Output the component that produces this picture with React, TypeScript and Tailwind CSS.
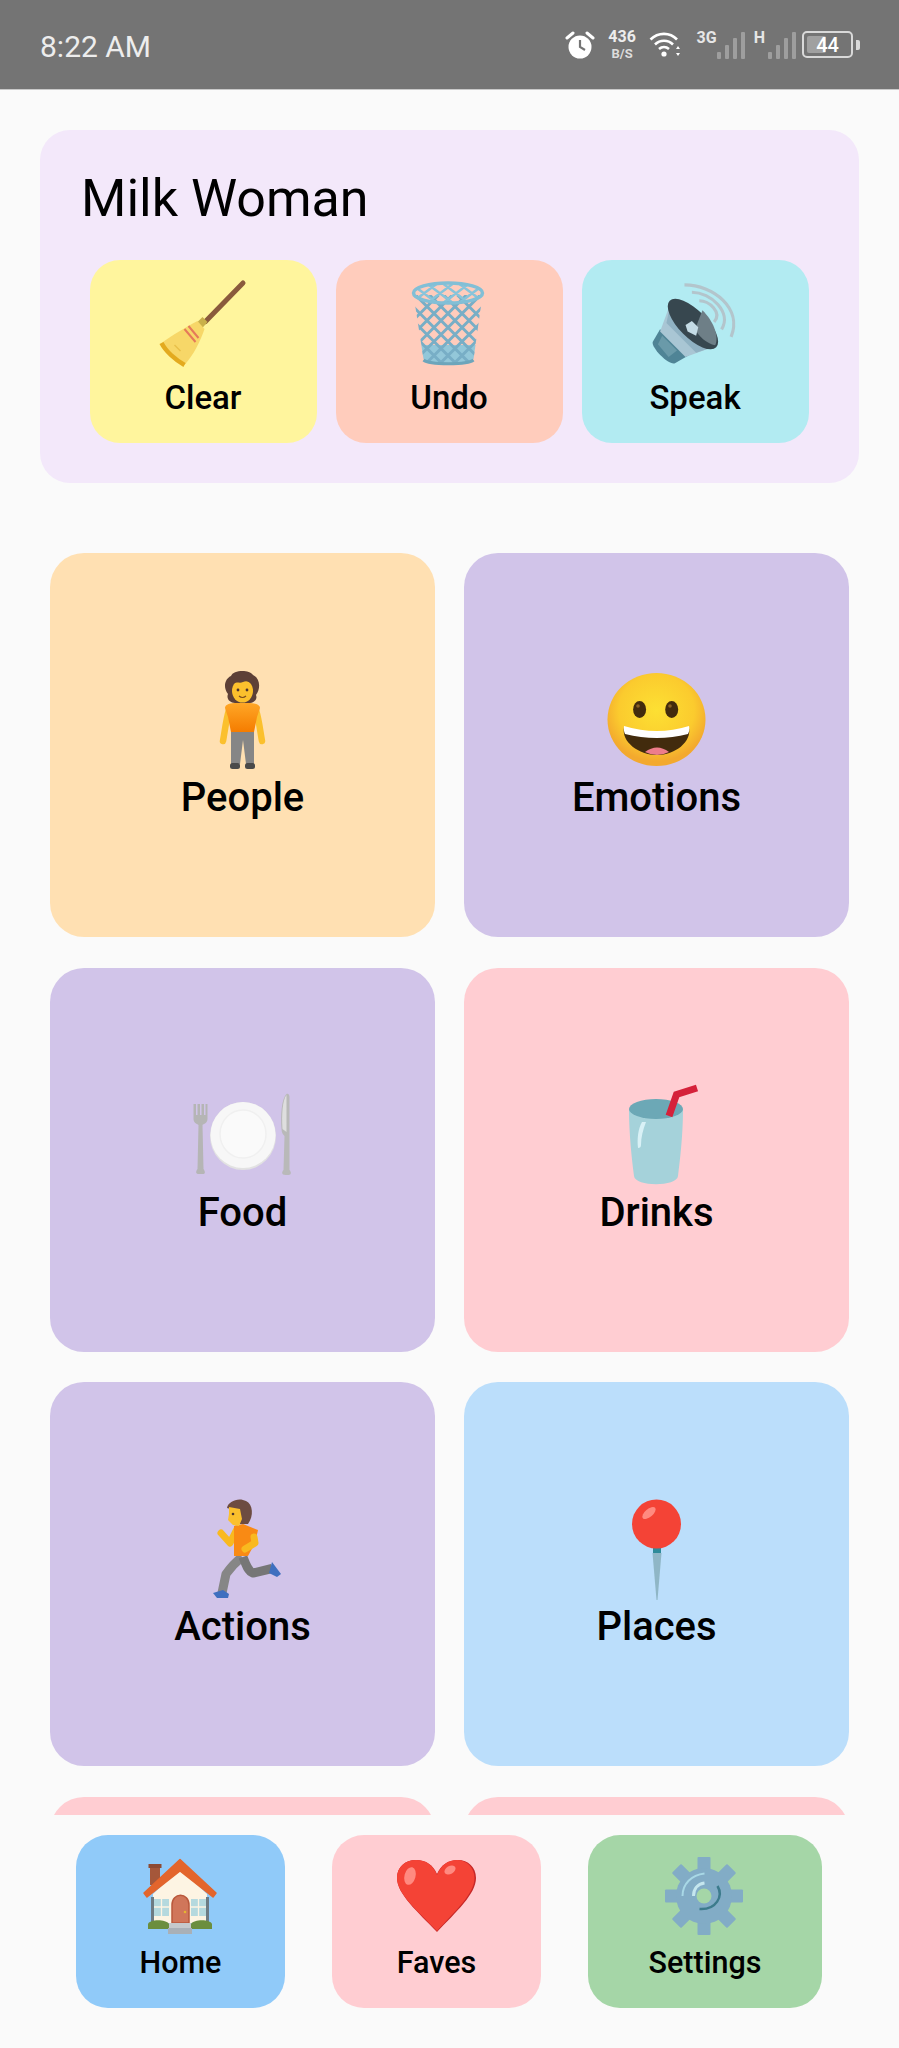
import React from 'react';

const Broom = () => (
  <svg viewBox="2.5 0 100 100" className="w-[100px] h-[100px] overflow-visible">
    <path d="M92.5 8 L55 46.5" stroke="#8a5a3c" strokeWidth="5" strokeLinecap="round" />
    <path d="M46 48 L52 42 L57 47 L51 54Z" fill="#c9b04a" />
    <path d="M47 46 L54 54 C50 66 43 80 34 90 L11 68 C22 60 36 52 47 46Z" fill="#f7d768" />
    <path d="M11 68 C15 76 25 85 34 90" stroke="#e3aa1f" strokeWidth="4.5" fill="none" />
    <path d="M34 54 L45 67 M38 51 L48 63" stroke="#e5795a" strokeWidth="2" />
    <path d="M24 70 L30 76" stroke="#e8c04a" strokeWidth="1.5" />
  </svg>
);

const Basket = () => (
  <svg viewBox="249.5 0 100 100" className="w-[100px] h-[100px] overflow-visible">
    <defs>
      <clipPath id="basketBody">
        <path d="M264 20 L333 20 L324 84 C318 90 280 90 274 84Z" />
      </clipPath>
      <clipPath id="basketTop">
        <ellipse cx="298.5" cy="18" rx="33" ry="9" />
      </clipPath>
    </defs>
    <g clipPath="url(#basketBody)">
      <rect x="262" y="70" width="74" height="22" fill="#80c6de" opacity="0.85" />
      <path
        d="M224 20 L294 90 M238 20 L308 90 M252 20 L322 90 M266 20 L336 90 M280 20 L350 90 M294 20 L364 90 M308 20 L378 90 M373 20 L303 90 M359 20 L289 90 M345 20 L275 90 M331 20 L261 90 M317 20 L247 90 M303 20 L233 90 M289 20 L219 90"
        stroke="#78aec6"
        strokeWidth="3"
      />
    </g>
    <path d="M274 85 C280 90 318 90 324 85" stroke="#6da5bb" strokeWidth="3" fill="none" />
    <g clipPath="url(#basketTop)">
      <path
        d="M262 9 L290 30 M278 9 L306 30 M294 9 L322 30 M310 9 L338 30 M335 9 L307 30 M319 9 L291 30 M303 9 L275 30 M287 9 L259 30"
        stroke="#88c4da"
        strokeWidth="2.5"
      />
    </g>
    <ellipse cx="298.5" cy="18" rx="34.5" ry="10" fill="none" stroke="#82bfd6" strokeWidth="3.5" />
  </svg>
);

const Speaker = () => (
  <svg viewBox="5 0 100 100" className="w-[100px] h-[100px] overflow-visible">
    <g transform="translate(54 48) scale(1.06) translate(-54 -48)">
      <path d="M45 12 C72 12 100 34 89 61" stroke="#b3c5cc" strokeWidth="3" fill="none" />
      <path d="M52 19 C70 19 90 38 80 54" stroke="#b3c5cc" strokeWidth="3" fill="none" />
      <path d="M59 27 C68 27 81 38 73 47" stroke="#b3c5cc" strokeWidth="3" fill="none" />
      <path d="M22 54 L15 66 C14 72 30 88 36 86 L50 78Z" fill="#4f8496" />
      <path d="M24 60 L20 68 L30 80 L38 74Z" fill="#6a9aa9" />
      <path d="M32 29 L22 56 L46 80 L74 70Z" fill="#a9c6d4" />
      <path d="M32 29 L28 48 L56 76 L74 70Z" fill="#90b2c3" />
      <ellipse cx="53" cy="49" rx="31" ry="13" transform="rotate(45 53 49)" fill="#37474f" />
      <path d="M62 36 C72 46 78 60 74 69 C66 68 58 60 55 54Z" fill="#6e7f87" />
      <path d="M46 50 L52 46 L58 52 L56 60 L48 56Z" fill="#c4dbe5" />
    </g>
  </svg>
);

const Person = () => (
  <svg viewBox="0 0 100 100" className="w-[100px] h-[100px] overflow-visible">
    <defs>
      <linearGradient id="shirtFill" x1="0" y1="0" x2="0" y2="1">
        <stop offset="0%" stopColor="#ffa726" />
        <stop offset="100%" stopColor="#f57c00" />
      </linearGradient>
    </defs>
    <path d="M36 40 C33 50 32 60 30 71" stroke="#fbc02d" strokeWidth="6.5" strokeLinecap="round" fill="none" />
    <path d="M63 40 C66 50 67 60 69 71" stroke="#fbc02d" strokeWidth="6.5" strokeLinecap="round" fill="none" />
    <path d="M38 60 L61 60 L61 94 L53 94 L50 70 L47 94 L38 94Z" fill="#868686" />
    <rect x="37" y="93" width="10" height="6" rx="2.5" fill="#4a4a4a" />
    <rect x="52" y="93" width="10" height="6" rx="2.5" fill="#4a4a4a" />
    <path d="M32 38 C32 34 38 33 43 33 L55 33 C60 33 67 34 67 38 L64 47 L61 62 L38 62 L35 47Z" fill="url(#shirtFill)" />
    <path d="M35 24 C29 16 33 8 38 6 C40 0 56 -1 60 5 C67 8 68 18 63 25 C65 30 60 33 57 33 L42 33 C37 33 33 29 35 24Z" fill="#5d4037" />
    <ellipse cx="49.5" cy="21" rx="10.5" ry="11.5" fill="#fbc02d" />
    <path d="M38 16 C42 10 46 14 50 12 C54 10 58 12 61 17 L60 8 L40 8Z" fill="#5d4037" />
    <circle cx="45" cy="20" r="1.4" fill="#4e342e" />
    <circle cx="54" cy="20" r="1.4" fill="#4e342e" />
    <path d="M46 26 Q49.5 29 53 26" stroke="#7a4a1e" strokeWidth="1.2" fill="none" />
  </svg>
);

const Grin = () => (
  <svg viewBox="0 0 100 100" className="w-[100px] h-[100px] overflow-visible">
    <defs>
      <radialGradient id="faceFill" cx="50%" cy="40%" r="55%">
        <stop offset="0%" stopColor="#fde033" />
        <stop offset="70%" stopColor="#fbcb2e" />
        <stop offset="100%" stopColor="#f3a92e" />
      </radialGradient>
    </defs>
    <ellipse cx="49.5" cy="49.5" rx="49" ry="46.5" fill="url(#faceFill)" />
    <ellipse cx="32.6" cy="39.5" rx="6.5" ry="8.5" fill="#422b0d" />
    <ellipse cx="64.7" cy="39.5" rx="6.5" ry="8.5" fill="#422b0d" />
    <circle cx="31" cy="36" r="1.8" fill="#896024" />
    <circle cx="63" cy="36" r="1.8" fill="#896024" />
    <path d="M17 57 Q50 67 82 57 C85 72 68 85 50 85 C32 85 14 72 17 57Z" fill="#422b0d" />
    <path d="M38 82 Q50 73 62 82 Q56 85 50 85 Q44 85 38 82Z" fill="#ed7d8b" />
    <path d="M17 56 Q50 66 82 56 C83 59 82 62 81 64 Q50 72 18 64 C17 62 16.5 59 17 56Z" fill="#ffffff" />
  </svg>
);

const Plate = () => (
  <svg viewBox="12.5 0 100 100" className="w-[100px] h-[100px] overflow-visible">
    <path d="M13 19 L13 34 C13 38 17 39 18 40 L17 84 C15 87 15 89 19 89 L22 89 C25 89 25 87 23 84 L22 40 C23 39 27 38 27 34 L27 19 L25 19 L25 30 L23.5 30 L23.5 19 L21 19 L21 30 L19.5 30 L19.5 19 L17 19 L17 30 L15.5 30 L15.5 19Z" fill="#b5b5b5" />
    <ellipse cx="62.5" cy="51" rx="33" ry="34" fill="#e2e2e2" />
    <ellipse cx="62.5" cy="50" rx="32.5" ry="33" fill="#f7f7f7" />
    <ellipse cx="62.5" cy="49" rx="23" ry="24" fill="#fafafa" stroke="#f0f0f0" strokeWidth="1.5" />
    <path d="M106 9 C101 14 100 30 101 44 C101 48 103 50 104 51 L103 85 C101 87 101 90 105 90 L108 90 C111 90 111 87 109 85 L109 50 L109 12 C109 9 107 8 106 9Z" fill="#b9b9b9" />
    <path d="M106 10 C102 15 101 30 102 44 L106 47Z" fill="#dedede" />
  </svg>
);

const Cup = () => (
  <svg viewBox="0 0 100 100" className="w-[100px] h-[100px] overflow-visible">
    <path d="M22 24 C22 50 25 75 27 91 C28 102 70 102 71 91 C73 75 76 50 76 24Z" fill="#a5d2da" />
    <ellipse cx="49" cy="24" rx="27" ry="10" fill="#6ca8b6" />
    <path d="M35 37 C31 44 30 54 31 63 C33 63 34 62 34 60 C34 52 36 45 39 37Z" fill="#d9f1f6" />
    <path d="M62 31 L69.5 9.5 L90 3" stroke="#d5213a" strokeWidth="7" fill="none" />
  </svg>
);

const Runner = () => (
  <svg viewBox="0 0 100 100" className="w-[100px] h-[100px] overflow-visible">
    <path d="M49 58 C44 62 38 68 33 75 L29 94" stroke="#868686" strokeWidth="9" strokeLinejoin="round" fill="none" />
    <path d="M50 58 C53 66 55 72 60 74 L79 69.5" stroke="#767676" strokeWidth="9" strokeLinejoin="round" fill="none" />
    <path d="M79 63 L88 75 L84 78 L76 74Z" fill="#3e6fbf" />
    <path d="M20 94 L30 91 L36 95 L35 99 L24 99Z" fill="#3e6fbf" />
    <path d="M44 30 L37 44 L28 34" stroke="#f9b91f" strokeWidth="7" strokeLinecap="round" strokeLinejoin="round" fill="none" />
    <path d="M41 27 L50 25 L65 31 L62 44 L55 57 L41 57Z" fill="#f98a14" />
    <path d="M61 38 L62 44 L52 50" stroke="#f9b91f" strokeWidth="7" strokeLinecap="round" strokeLinejoin="round" fill="none" />
    <path d="M34 9 C35 2 46 -2 53 2 C60 5 61 17 55 25 L47 25 L45 12Z" fill="#6d4c41" />
    <path d="M36 8 L47 10 L49 20 L46 27 L40 26 L35 21 L36 15Z" fill="#fbc02d" />
    <circle cx="40" cy="15" r="1.3" fill="#4e342e" />
  </svg>
);

const Pin = () => (
  <svg viewBox="0 0 100 100" className="w-[100px] h-[100px] overflow-visible">
    <path d="M45.5 54 L54.5 54 L50.5 101 L49.5 101Z" fill="#8fb6c6" />
    <rect x="46" y="47" width="8" height="7" fill="#2e8b9a" />
    <circle cx="49.5" cy="25" r="24.5" fill="#f44336" />
    <ellipse cx="42" cy="14" rx="8" ry="4" transform="rotate(-40 42 14)" fill="#ff8a80" />
  </svg>
);

const House = () => (
  <svg viewBox="1 0 100 85" className="w-[100px] h-[85px] overflow-visible">
    <rect x="20" y="15" width="10" height="20" fill="#a5573a" />
    <rect x="18.5" y="14" width="13" height="4" fill="#8d4a33" />
    <path d="M23 44 L50 19 L77 44 L77 73 L23 73Z" fill="#fdf4e3" />
    <rect x="21" y="47" width="3" height="25" fill="#6d7b83" />
    <rect x="76" y="47" width="3" height="25" fill="#6d7b83" />
    <path d="M24 49 L39 49 L39 66 L24 66Z" fill="#b5d9de" />
    <path d="M61 49 L76 49 L76 66 L61 66Z" fill="#b5d9de" />
    <path d="M31.5 49 V66 M24 57 H39 M68.5 49 V66 M61 57 H76" stroke="#fdf4e3" strokeWidth="1.3" />
    <path d="M42 73 L42 55 C42 42 59 42 59 55 L59 73Z" fill="#d0765a" stroke="#b9583c" strokeWidth="1.5" />
    <circle cx="55" cy="62" r="1.3" fill="#e5b531" />
    <path d="M18 79 L18 74 C20 69 36 69 39 74 L39 79Z" fill="#6b8e3e" />
    <path d="M61 79 L61 74 C64 69 80 69 82 74 L82 79Z" fill="#6b8e3e" />
    <rect x="39" y="73" width="22" height="5" fill="#c5c9cc" />
    <rect x="38" y="78" width="24" height="6" fill="#a9b0b7" />
    <path d="M14 43 L50 9.5 L86 43 L83 47 L50 21 L17 47Z" fill="#e3652c" stroke="#e3652c" strokeWidth="1.5" strokeLinejoin="round" />
  </svg>
);

const Heart = () => (
  <svg viewBox="-1 0 100 85" className="w-[100px] h-[85px] overflow-visible">
    <path d="M49 82 C30 62 9 44 9 28 C9 17 17 10 28 10 C38 10 45 15 49 24 C53 15 60 10 70 10 C80 10 88 17 88 28 C88 44 68 62 49 82Z" fill="#c62828" />
    <path d="M49 81 C30 61 9 44 9 28 C9 17 17 10 28 10 C38 10 45 15 49 25 C53 15 60 10 69 10 C79 10 86.5 18 86.5 28 C86.5 44 67 61 49 81Z" fill="#f44336" />
    <ellipse cx="22" cy="26" rx="5.5" ry="9" transform="rotate(15 22 26)" fill="#ff8a80" />
    <ellipse cx="62" cy="20" rx="6" ry="4" transform="rotate(-30 62 20)" fill="#ff8a80" />
  </svg>
);

const Gear = () => (
  <svg viewBox="0.5 0 100 85" className="w-[100px] h-[85px] overflow-visible">
    <g fill="#82acc6">
      <rect x="43" y="7" width="13" height="78" rx="1" />
      <rect x="43" y="7" width="13" height="78" rx="1" transform="rotate(45 49.5 46)" />
      <rect x="43" y="7" width="13" height="78" rx="1" transform="rotate(90 49.5 46)" />
      <rect x="43" y="7" width="13" height="78" rx="1" transform="rotate(135 49.5 46)" />
      <circle cx="49.5" cy="46" r="28" />
    </g>
    <circle cx="49.5" cy="46" r="7.5" fill="#a5d6a7" />
    <path d="M28 46 C28 34 37 25 50 23.5" stroke="#a8d8e6" strokeWidth="2" fill="none" />
    <path d="M39 46 C39 39 43 34 50 33" stroke="#c5e6ee" strokeWidth="3" fill="none" />
    <path d="M63 36 C69 46 62 60 45 59" stroke="#3c7b8c" strokeWidth="2.5" fill="none" />
  </svg>
);

const categories = [
  { label: 'People', bg: 'bg-[#FFE0B2]', icon: <Person /> },
  { label: 'Emotions', bg: 'bg-[#D1C4E9]', icon: <Grin /> },
  { label: 'Food', bg: 'bg-[#D1C4E9]', icon: <Plate /> },
  { label: 'Drinks', bg: 'bg-[#FFCDD2]', icon: <Cup /> },
  { label: 'Actions', bg: 'bg-[#D1C4E9]', icon: <Runner /> },
  { label: 'Places', bg: 'bg-[#BBDEFB]', icon: <Pin /> },
];

const SignalBars = () => (
  <svg viewBox="0 0 28 27" className="w-[28px] h-[27px]">
    <g fill="#ffffff" opacity="0.3">
      <rect x="0" y="20" width="4" height="7" rx="1" />
      <rect x="8" y="13" width="4" height="14" rx="1" />
      <rect x="16" y="6" width="4" height="21" rx="1" />
      <rect x="24" y="0" width="4" height="27" rx="1" />
    </g>
  </svg>
);

const StatusBar = () => (
  <div className="h-[90px] shrink-0 flex items-center justify-between bg-[#747474] border-b border-[#c9c9c9] pl-[40px] pr-[39px] text-[#ededed]">
    <span className="mt-[4px] text-[30px] leading-none">8:22 AM</span>
    <div className="flex items-center">
      <svg viewBox="0 0 30 28" className="w-[30px] h-[28px]">
        <circle cx="15" cy="16" r="11.5" fill="#ffffff" />
        <path d="M15 9 V16 L20 19" stroke="#747474" strokeWidth="2.2" fill="none" />
        <path d="M2 7 L8 2 M28 7 L22 2" stroke="#ffffff" strokeWidth="3" strokeLinecap="round" />
      </svg>
      <div className="ml-[13px] w-[29px] flex flex-col items-center font-bold">
        <span className="text-[16px] leading-[14px]">436</span>
        <span className="text-[13px] leading-[13px] mt-[3px] text-[#dcdcdc]">B/S</span>
      </div>
      <svg viewBox="0 0 32 25" className="ml-[12px] w-[32px] h-[25px]">
        <path d="M1.5 7.5 C9 0 21 0 28 7.5" stroke="#ffffff" strokeWidth="2.6" fill="none" />
        <path d="M6 12.5 C11 7.5 19 7.5 24 12.5" stroke="#ffffff" strokeWidth="2.6" fill="none" />
        <path d="M10 17 C13 14.5 17 14.5 20 17" stroke="#ffffff" strokeWidth="2.6" fill="none" />
        <circle cx="15" cy="22" r="2.6" fill="#ffffff" />
        <path d="M29 14 L31 17 H27Z M29 24 L31 21 H27Z" fill="#ffffff" />
      </svg>
      <div className="ml-[16px] flex items-end">
        <span className="text-[16px] leading-none font-bold mb-[13px] text-[#e6e6e6]">3G</span>
        <SignalBars />
      </div>
      <div className="ml-[9px] flex items-end">
        <span className="text-[16px] leading-none font-bold mb-[13px] mr-[3px] text-[#e6e6e6]">H</span>
        <SignalBars />
      </div>
      <div className="ml-[6px] flex items-center">
        <div className="relative w-[51px] h-[27px] rounded-[5px] border-2 border-[#d9d9d9]">
          <div className="absolute left-[3px] top-[3px] bottom-[3px] w-[19px] rounded-[2px] bg-[#a0a0a0]" />
          <span className="absolute inset-0 flex items-center justify-center text-[20px] font-medium text-white leading-none">44</span>
        </div>
        <div className="ml-[3px] w-[4px] h-[10px] rounded-r-[2px] bg-[#d9d9d9]" />
      </div>
    </div>
  </div>
);

const ActionButton = ({ label, bg, icon }: { label: string; bg: string; icon: React.ReactNode }) => (
  <div className={`w-[227px] h-[183px] rounded-[30px] pt-[15px] flex flex-col items-center ${bg}`}>
    {icon}
    <span className="mt-[1px] text-[33px] leading-[44px] font-medium text-black">{label}</span>
  </div>
);

const NavButton = ({ label, bg, width, icon }: { label: string; bg: string; width: string; icon: React.ReactNode }) => (
  <div className={`h-[173px] rounded-[32px] pt-[15px] flex flex-col items-center ${bg} ${width}`}>
    {icon}
    <span className="mt-[8px] text-[30.5px] leading-[40px] font-medium text-black">{label}</span>
  </div>
);

export default function App() {
  return (
    <div className="h-[2048px] w-[899px] flex flex-col overflow-hidden bg-[#FAFAFA] font-[Roboto,sans-serif]">
      <StatusBar />
      <div className="flex-1 min-h-0 overflow-hidden">
        <div className="mt-[40px] mx-[40px] h-[353px] rounded-[30px] bg-[#F3E8FA] pt-[39px] pl-[49.5px] pr-[49px]">
          <h1 className="ml-[-8.5px] text-[52px] leading-[60px] font-normal text-black">Milk Woman</h1>
          <div className="mt-[31px] flex gap-[19px]">
            <ActionButton label="Clear" bg="bg-[#FFF59D]" icon={<Broom />} />
            <ActionButton label="Undo" bg="bg-[#FFCCBC]" icon={<Basket />} />
            <ActionButton label="Speak" bg="bg-[#B2EBF2]" icon={<Speaker />} />
          </div>
        </div>
        <div className="mt-[70px] mx-[50px] grid grid-cols-2 gap-x-[29px] gap-y-[30.5px]">
          {categories.map((c) => (
            <div key={c.label} className={`h-[384px] rounded-[34px] pt-[117px] flex flex-col items-center ${c.bg}`}>
              {c.icon}
              <span className="mt-[3px] text-[40px] leading-[50px] font-medium text-black">{c.label}</span>
            </div>
          ))}
          <div className="h-[384px] rounded-[34px] bg-[#FFCDD2]" />
          <div className="h-[384px] rounded-[34px] bg-[#FFCDD2]" />
        </div>
      </div>
      <div className="h-[233px] shrink-0 pt-[20px] pl-[76px] pr-[77px] flex justify-between items-start bg-[#FAFAFA]">
        <NavButton label="Home" bg="bg-[#90CAF9]" width="w-[209px]" icon={<House />} />
        <NavButton label="Faves" bg="bg-[#FFCDD2]" width="w-[209px]" icon={<Heart />} />
        <NavButton label="Settings" bg="bg-[#A5D6A7]" width="w-[234px]" icon={<Gear />} />
      </div>
    </div>
  );
}
